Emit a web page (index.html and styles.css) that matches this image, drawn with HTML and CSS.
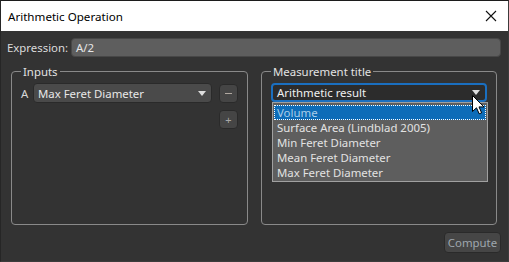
FILE: index.html
```html
<!DOCTYPE html>
<html>
<head>
<meta charset="utf-8">
<link rel="stylesheet" href="styles.css">
</head>
<body>
<div class="window">
  <div class="titlebar">
    <span class="title">Arithmetic Operation</span>
    <svg class="close" width="12" height="12" viewBox="0 0 12 12"><path d="M1 1 L11 11 M11 1 L1 11" stroke="#111" stroke-width="1.1" fill="none"/></svg>
  </div>
  <div class="content">
    <div class="expr-row">
      <span class="label">Expression:</span>
      <div class="expr-input">A/2</div>
    </div>
    <div class="groups">
      <fieldset class="group">
        <legend>Inputs</legend>
        <div class="inputs-grid">
          <span class="var">A</span>
          <div class="combo"><span>Max Feret Diameter</span><span class="arrow"></span></div>
          <div class="btn-sq"><span class="minus"></span></div>
          <span></span><span></span>
          <div class="btn-sq"><span class="plus">+</span></div>
        </div>
      </fieldset>
      <fieldset class="group">
        <legend>Measurement title</legend>
        <div class="title-wrap">
          <div class="combo focused"><span>Arithmetic result</span><span class="arrow"></span></div>
          <ul class="dropdown">
            <li class="sel">Volume</li>
            <li>Surface Area (Lindblad 2005)</li>
            <li>Min Feret Diameter</li>
            <li>Mean Feret Diameter</li>
            <li>Max Feret Diameter</li>
          </ul>
          <svg class="cursor" width="13" height="20" viewBox="0 0 13 20"><path d="M0.5 0.5 L0.5 16.5 L4.5 12.8 L7.2 18.8 L9.6 17.8 L7 11.9 L12 11.9 Z" fill="#fff" stroke="#000" stroke-width="1"/></svg>
        </div>
      </fieldset>
    </div>
    <div class="footer">
      <div class="btn">Compute</div>
    </div>
  </div>
</div>
</body>
</html>
```
FILE: styles.css
```css
* { box-sizing: border-box; }
html, body { margin: 0; padding: 0; overflow: hidden; }
body { width: 509px; height: 262px; font-family: "Noto Sans", "Open Sans", sans-serif; font-size: 11.4px; }
.window {
  width: 509px; height: 262px;
  border: 1px solid #3c3c3c;
  border-top-color: #1c1c1c;
  border-left-color: #262626;
  background: #333333;
  display: flex; flex-direction: column;
}
.titlebar {
  height: 30px; background: #ffffff;
  display: flex; align-items: center; justify-content: space-between;
  padding: 0 11px 0 7px;
}
.title { color: #000; font-size: 11.6px; }
.content { flex: 1; display: flex; flex-direction: column; padding: 7px 7px 0 6px; }
.expr-row { display: flex; align-items: center; gap: 8px; height: 19px; }
.label { color: #dcdcdc; width: 56px; white-space: nowrap; }
.expr-input {
  flex: 1; height: 19px; background: #5e5e5e; border: 1px solid #474747; border-radius: 4px;
  color: #e6e6e6; padding: 0 4px; line-height: 17px;
}
.groups { display: flex; gap: 13px; padding: 7px 4px 0 4px; }
.group {
  margin: 0; width: 237px; height: 161px;
  border: 1px solid #8a8a8a; border-radius: 4px;
  padding: 4px 9px 0 9px;
}
.group legend { margin-left: 0; padding: 0 2px; color: #e2e2e2; line-height: 15px; }
.inputs-grid {
  display: grid; grid-template-columns: 12px 186px 19px; row-gap: 7px;
  align-items: center;
}
.inputs-grid .combo { width: 179px; }
.var { color: #d8d8d8; }
.combo {
  height: 20px; background: #4a4a4a; border: 1px solid #2a2a2a; border-radius: 4px;
  color: #e8e8e8; display: flex; align-items: center; justify-content: space-between;
  padding: 0 4px 0 4px; position: relative;
}
.arrow {
  width: 0; height: 0; border-left: 4px solid transparent; border-right: 4px solid transparent;
  border-top: 5px solid #dedede; margin-right: 1px;
}
.btn-sq {
  width: 19px; height: 19px; background: #454545; border: 1px solid #2a2a2a; border-radius: 4px;
  display: flex; align-items: center; justify-content: center;
}
.minus { width: 7px; height: 1px; background: #b0a8a0; }
.plus { color: #a8a8a8; font-size: 11px; line-height: 1; }
.title-wrap { position: relative; }
.combo.focused { background: #2c2c2c; border: 2px solid #1a6fc0; height: 19px; width: 216px; padding-left: 4px; color: #f0f0f0; }
.dropdown {
  position: absolute; left: 1px; top: 19px; width: 216px; margin: 0; padding: 2px 1px 1px 1px;
  list-style: none; background: #5e5e5e; border: 1px solid #a0a0a0; z-index: 2;
}
.dropdown li { height: 15px; line-height: 15px; color: #e2e2e2; padding-left: 3px; overflow: hidden; }
.dropdown li.sel { background: #0d6cb8; color: #a9cde8; outline: 1px dotted #ffffff; outline-offset: -1px; }
.cursor { position: absolute; left: 201px; top: 12px; z-index: 3; }
.footer { display: flex; justify-content: flex-end; padding-top: 7px; }
.btn {
  width: 57px; height: 21px; background: #464646; border: 1px solid #2a2a2a; border-radius: 4px;
  color: #9ea6ae; display: flex; align-items: center; justify-content: center;
}
```
